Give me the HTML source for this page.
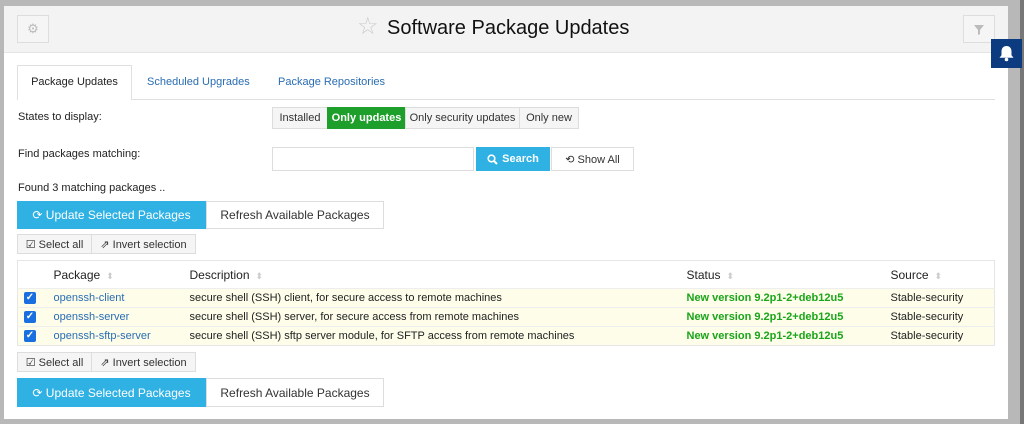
<!DOCTYPE html>
<html><head><style>
*{box-sizing:border-box;margin:0;padding:0}
body{width:1024px;height:424px;background:#b8b8b8;font-family:"Liberation Sans",sans-serif;font-size:11px;color:#222;position:relative;overflow:hidden}
.abs{position:absolute}
#panel{left:4px;top:6px;width:1004px;height:413px;background:#fff}
#hdr{left:4px;top:6px;width:1004px;height:47px;background:#f3f3f3;border-bottom:1px solid #e4e4e4}
.sq{width:32px;height:28px;border:1px solid #ddd;background:#f5f5f5}
.btn{position:absolute;display:flex;align-items:center;justify-content:center;border:1px solid #ddd;background:#f5f5f5;font-size:11px;color:#333}
.blue{background:#2fb1e4;border-color:#2fb1e4;color:#fff}
td,th{font-size:11px;text-align:left;padding:0;vertical-align:middle}
.g{color:#1aa51a;font-weight:bold}
a{color:#2a6db3;text-decoration:none}
.cb{display:block;width:12px;height:12px;background:#1a6fe0;border-radius:2px;color:#fff;font-size:10px;line-height:12px;text-align:center;font-weight:bold}
.so{color:#ccc;font-size:9px;margin-left:6px}
</style></head><body>
<div class="abs" style="left:1020px;top:0;width:4px;height:424px;background:#777"></div>
<div id="panel" class="abs"></div>
<div id="hdr" class="abs"></div>
<div class="abs sq" style="left:17px;top:15px;color:#bbb;text-align:center;line-height:26px;font-size:13px">⚙</div>
<div class="abs sq" style="left:963px;top:15px"><svg width="30" height="26" viewBox="0 0 30 26"><path d="M10 9h10l-4 5v4l-2 1v-5z" fill="#bbb"/></svg></div>
<div class="abs" style="left:357px;top:13px;font-size:24px;color:#ccc;line-height:28px">☆</div>
<div class="abs" style="left:387px;top:15px;font-size:20px;color:#111;line-height:26px">Software Package Updates</div>
<div class="abs" style="left:991px;top:39px;width:31px;height:29px;background:#0c3b80"><svg width="31" height="29" viewBox="0 0 31 29"><path d="M15.5 7c-3 0-5 2.3-5 5.3v4l-2 2.5h14l-2-2.5v-4c0-3-2-5.3-5-5.3z" fill="#fff"/><circle cx="15.5" cy="20.5" r="1.8" fill="#fff"/></svg></div>

<div class="abs" style="left:17px;top:99px;width:978px;height:1px;background:#e0e0e0"></div>
<div class="abs" style="left:17px;top:65px;width:115px;height:35px;border:1px solid #e0e0e0;border-bottom:none;background:#fff;text-align:center;line-height:33px">Package Updates</div>
<div class="abs" style="left:147px;top:76px;color:#2a6db3">Scheduled Upgrades</div>
<div class="abs" style="left:278px;top:76px;color:#2a6db3">Package Repositories</div>

<div class="abs" style="left:18px;top:111px">States to display:</div>
<div class="btn" style="left:272px;top:107px;width:56px;height:22px">Installed</div>
<div class="btn" style="left:327px;top:107px;width:79px;height:22px;background:#1e9e2a;border-color:#1e9e2a;color:#fff;font-weight:bold">Only updates</div>
<div class="btn" style="left:405px;top:107px;width:115px;height:22px">Only security updates</div>
<div class="btn" style="left:519px;top:107px;width:60px;height:22px">Only new</div>

<div class="abs" style="left:18px;top:148px">Find packages matching:</div>
<div class="abs" style="left:272px;top:147px;width:202px;height:24px;border:1px solid #ddd;background:#fff"></div>
<div class="btn blue" style="left:476px;top:147px;width:74px;height:24px;font-weight:bold"><svg width="11" height="11" viewBox="0 0 11 11" style="margin-right:4px"><circle cx="4.5" cy="4.5" r="3.3" stroke="#fff" stroke-width="1.6" fill="none"/><path d="M7 7l3 3" stroke="#fff" stroke-width="2"/></svg>Search</div>
<div class="btn" style="left:551px;top:147px;width:83px;height:24px;background:#fff">⟲&nbsp;Show All</div>

<div class="abs" style="left:18px;top:182px">Found 3 matching packages ..</div>
<div class="btn blue" style="left:17px;top:201px;width:189px;height:28px;font-size:12px">⟳&nbsp;Update Selected Packages</div>
<div class="btn" style="left:206px;top:201px;width:178px;height:28px;background:#fff;font-size:12px">Refresh Available Packages</div>
<div class="btn" style="left:17px;top:234px;width:75px;height:20px">☑&nbsp;Select all</div>
<div class="btn" style="left:91px;top:234px;width:105px;height:20px">⇗&nbsp;Invert selection</div>

<table class="abs" style="left:17px;top:260px;width:978px;border-collapse:collapse;border:1px solid #e6e6e6">
<tr style="height:28px;background:#fff"><th style="width:36px"></th><th style="width:136px;font-weight:normal;font-size:12px">Package<span class="so">⬍</span></th><th style="width:497px;font-weight:normal;font-size:12px">Description<span class="so">⬍</span></th><th style="width:204px;font-weight:normal;font-size:12px">Status<span class="so">⬍</span></th><th style="font-weight:normal;font-size:12px">Source<span class="so">⬍</span></th></tr>
<tr style="height:19px;background:#fdfdea;border-top:1px solid #eee"><td style="padding-left:6px"><span class="cb">✓</span></td><td><a>openssh-client</a></td><td>secure shell (SSH) client, for secure access to remote machines</td><td class="g">New version 9.2p1-2+deb12u5</td><td>Stable-security</td></tr>
<tr style="height:19px;background:#fdfdea;border-top:1px solid #eee"><td style="padding-left:6px"><span class="cb">✓</span></td><td><a>openssh-server</a></td><td>secure shell (SSH) server, for secure access from remote machines</td><td class="g">New version 9.2p1-2+deb12u5</td><td>Stable-security</td></tr>
<tr style="height:19px;background:#fdfdea;border-top:1px solid #eee"><td style="padding-left:6px"><span class="cb">✓</span></td><td><a>openssh-sftp-server</a></td><td>secure shell (SSH) sftp server module, for SFTP access from remote machines</td><td class="g">New version 9.2p1-2+deb12u5</td><td>Stable-security</td></tr>
</table>

<div class="btn" style="left:17px;top:352px;width:75px;height:20px">☑&nbsp;Select all</div>
<div class="btn" style="left:91px;top:352px;width:105px;height:20px">⇗&nbsp;Invert selection</div>
<div class="btn blue" style="left:17px;top:378px;width:189px;height:29px;font-size:12px">⟳&nbsp;Update Selected Packages</div>
<div class="btn" style="left:206px;top:378px;width:178px;height:29px;background:#fff;font-size:12px">Refresh Available Packages</div>
</body></html>
